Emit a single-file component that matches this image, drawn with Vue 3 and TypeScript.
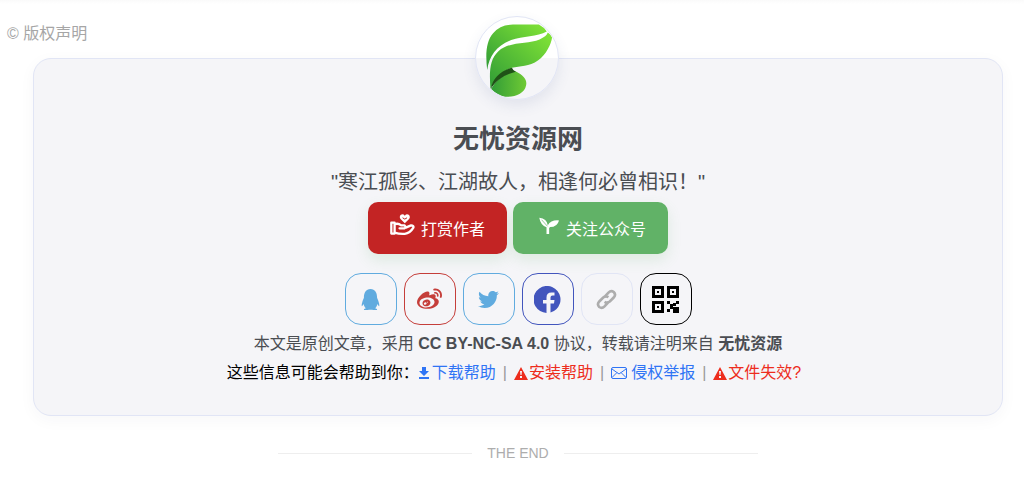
<script setup lang="ts">
interface Social {
  id: string
  label: string
  viewBox: string
  path: string
}

const socials: Social[] = [
  {
    id: 'qq',
    label: 'QQ',
    viewBox: '0 0 448 512',
    path: 'M433.754 420.445c-11.526 1.393-44.86-52.741-44.86-52.741 0 31.345-16.136 72.247-51.051 101.786 16.842 5.192 54.843 19.167 45.803 34.421-7.316 12.343-125.51 7.881-159.632 4.037-34.122 3.844-152.316 8.306-159.632-4.037-9.045-15.25 28.918-29.214 45.783-34.415-34.92-29.539-51.059-70.445-51.059-101.792 0 0-33.334 54.134-44.859 52.741-5.37-.65-12.424-29.644 9.347-99.704 10.261-33.024 21.995-60.478 40.144-105.779C60.683 98.063 108.982.006 224 0c113.737.006 163.156 96.133 160.264 214.963 18.118 45.223 29.912 72.85 40.144 105.778 21.768 70.06 14.716 99.053 9.346 99.704z',
  },
  {
    id: 'weibo',
    label: '微博',
    viewBox: '0 0 512 512',
    path: 'M407 177.6c7.6-24-13.4-46.8-37.4-41.7-22 4.8-28.8-28.1-7.1-32.8 50.1-10.9 92.3 37.1 76.5 84.8-6.8 21.2-38.8 10.8-32-10.3zM214.8 446.7C108.5 446.7 0 395.3 0 310.4c0-44.3 28-95.4 76.3-143.7C176 67 279.5 65.8 249.9 161c-4 13.1 12.3 5.7 12.3 6 79.5-33.6 140.5-16.8 114 51.4-3.7 9.4 1.1 10.9 8.3 13.1 135.7 42.3 34.8 215.2-169.7 215.2zm143.7-146.3c-5.4-55.7-78.5-94-163.4-85.7-84.8 8.6-148.8 60.3-143.4 116s78.5 94 163.4 85.7c84.8-8.6 148.8-60.3 143.4-116zM347.9 35.1c-25.9 5.6-16.8 43.7 8.3 38.3 72.3-15.2 134.8 52.8 111.7 124-7.4 24.2 29.1 37 37.4 12 31.9-99.8-55.1-195.9-157.4-174.3zm-78.5 311c-17.1 38.8-66.8 60-109.1 46.3-40.8-13.1-58-53.4-40.3-89.7 17.7-35.4 63.1-55.4 103.4-45.1 42 10.8 63.1 50.2 46 88.5zm-86.3-30c-12.9-5.4-30 .3-38 12.9-8.3 12.9-4.3 28 8.6 34 13.1 6 30.8.3 39.1-12.9 8-13.1 3.7-28.3-9.7-34zm32.6-13.4c-5.1-1.7-11.4.6-14.3 5.4-2.9 5.1-1.4 10.6 3.7 12.9 5.1 2 11.7-.3 14.6-5.4 2.8-5.2 1.1-10.9-4-12.9z',
  },
  {
    id: 'twitter',
    label: 'Twitter',
    viewBox: '0 0 512 512',
    path: 'M459.37 151.716c.325 4.548.325 9.097.325 13.645 0 138.72-105.583 298.558-298.558 298.558-59.452 0-114.68-17.219-161.137-47.106 8.447.974 16.568 1.299 25.34 1.299 49.055 0 94.213-16.568 130.274-44.832-46.132-.975-84.792-31.188-98.112-72.772 6.498.974 12.995 1.624 19.818 1.624 9.421 0 18.843-1.3 27.614-3.573-48.081-9.747-84.143-51.98-84.143-102.985v-1.299c13.969 7.797 30.214 12.67 47.431 13.319-28.264-18.843-46.781-51.005-46.781-87.391 0-19.492 5.197-37.36 14.294-52.954 51.655 63.675 129.3 105.258 216.365 109.807-1.624-7.797-2.599-15.918-2.599-24.04 0-57.828 46.782-104.934 104.934-104.934 30.213 0 57.502 12.67 76.67 33.137 23.715-4.548 46.456-13.32 66.599-25.34-7.798 24.366-24.366 44.833-46.132 57.827 21.117-2.273 41.584-8.122 60.426-16.243-14.292 20.791-32.161 39.308-52.628 54.253z',
  },
  {
    id: 'facebook',
    label: 'Facebook',
    viewBox: '0 0 54 54',
    path: 'M25 53.9A27 27 0 1 1 33 53V35h7l1-7H33v-5q0-4 4-4h4v-6h-6q-10 0-10 10v5h-7v7h7v19z',
  },
  {
    id: 'link',
    label: '复制链接',
    viewBox: '0 0 64 64',
    path: 'M26 24L38 11Q46 3 54 9Q62 17 54 26L42 38Q34 44 26 39M38 40L26 53Q18 61 10 55Q2 47 10 38L22 26Q30 20 38 25',
  },
  {
    id: 'qrcode',
    label: '二维码',
    viewBox: '0 0 27 27',
    path: 'M0 0h12v12H0zM3 3v6h6V3zM5 5h2v2H5zM15 0h12v12H15zM18 3v6h6V3zM20 5h2v2h-2zM0 15h12v12H0zM3 18v6h6v-6zM5 20h2v2H5zM15 15h3v3h-3zM18 18h3v3h3v3h-3v-1h-3zM24 15h3v3h-3zM21 17h3v3h-3zM15 23h3v3h-3zM24 21h3v6h-6v-3h3z',
  },
]
</script>

<template>
  <main class="page">
    <h2 class="notice">© 版权声明</h2>

    <section class="card">
      <svg class="avatar" viewBox="46 33 249 249" role="img" aria-label="无忧资源网">
        <defs>
          <linearGradient id="leaf" x1="0" y1="1" x2="1" y2="0">
            <stop offset="0" stop-color="#2f9b36" />
            <stop offset="1" stop-color="#83e536" />
          </linearGradient>
          <linearGradient id="stem" x1="0" y1="0" x2="1" y2="0">
            <stop offset="0" stop-color="#319c37" />
            <stop offset="1" stop-color="#6fca34" />
          </linearGradient>
        </defs>
        <path fill="url(#leaf)" d="M80 194C75 150 75 108 98 82Q120 56 158 56H237Q252 64 261 77C232 94 188 90 153 103C110 119 86 151 80 194z" />
        <path fill="url(#leaf)" d="M90 252C86 200 87 162 114 137C147 106 203 116 239 101Q260 92 264 80Q272 84 277 95C274 116 259 147 235 164C207 184 180 181 155 187C120 199 101 222 90 252z" />
        <path fill="url(#stem)" d="M92 252C108 222 134 204 166 198C192 211 202 225 198 241C194 264 165 277 135 275Q112 272 92 252z" />
        <path fill="#205217" d="M91 252C96 220 120 196 155 187Q158 195 167 199C135 207 108 222 91 252z" />
      </svg>

      <h1 class="name">无忧资源网</h1>
      <p class="quote">"寒江孤影、江湖故人，相逢何必曾相识！"</p>

      <div class="actions">
        <button class="action reward" type="button">
          <svg class="action-icon" viewBox="0 0 76 66" aria-hidden="true">
            <path fill="#fff" d="M45 28L32 15Q27 7 33 2Q40-2 45 5Q50-2 57 2Q63 7 58 15z" />
            <path fill="none" stroke="#c32424" stroke-width="3" stroke-linecap="round" d="M39 12Q45 19 51 12" />
            <path fill="none" stroke="#fff" stroke-width="7" stroke-linejoin="round" stroke-linecap="round" d="M4 26H14V59H4zM14 31Q24 26 34 34H44Q50 39 44 43H29M48 41L64 34Q73 35 71 41Q61 58 45 60Q28 61 14 56" />
          </svg>
          打赏作者
        </button>
        <button class="action follow" type="button">
          <svg class="action-icon" viewBox="-5 -3 76 66" aria-hidden="true">
            <path fill="#fff" d="M8 8Q31 10 34 31Q43 14 68 16Q63 36 41 36L38 39V57H30V37Q12 31 8 8z" />
            <path fill="none" stroke="#61b267" stroke-width="2" d="M15 14L33 34" />
          </svg>
          关注公众号
        </button>
      </div>

      <nav class="socials" aria-label="分享">
        <a v-for="s in socials" :key="s.id" class="social" :class="s.id" href="#" :aria-label="s.label">
          <svg class="social-icon" :viewBox="s.viewBox" aria-hidden="true">
            <path fill-rule="evenodd" :d="s.path" />
          </svg>
        </a>
      </nav>

      <p class="license">本文是原创文章，采用 <strong>CC BY-NC-SA 4.0</strong> 协议，转载请注明来自 <strong>无忧资源</strong></p>

      <div class="help">
        <span>这些信息可能会帮助到你：</span>
        <a class="blue" href="#">
          <svg class="glyph small" viewBox="0 0 10 12" aria-hidden="true">
            <path d="M3 0h4v4h3L5 9 0 4h3zM0 10h10v2H0z" />
          </svg>下载帮助</a>
        <span class="bar">|</span>
        <a class="red" href="#">
          <svg class="glyph" viewBox="0 0 14 13" aria-hidden="true">
            <path fill-rule="evenodd" d="M7 0l7 13H0zM6 4l.5 4h1L8 4zM6 9v2h2V9z" />
          </svg>安装帮助</a>
        <span class="bar">|</span>
        <a class="blue" href="#">
          <svg class="glyph mail" viewBox="0 0 16 12" aria-hidden="true">
            <path fill="none" stroke="currentColor" d="M2 .5h12q1.500 0 1.500 1.500v8q0 1.500-1.500 1.500H2Q.5 11.500.5 10V2Q.5.5 2 .5zM1 2l7 5 7-5M1 10.500l5-5M15 10.500l-5-5" />
          </svg>侵权举报</a>
        <span class="bar">|</span>
        <a class="red" href="#">
          <svg class="glyph" viewBox="0 0 14 13" aria-hidden="true">
            <path fill-rule="evenodd" d="M7 0l7 13H0zM6 4l.5 4h1L8 4zM6 9v2h2V9z" />
          </svg>文件失效?</a>
      </div>
    </section>

    <div class="ending">THE END</div>
  </main>
</template>

<style>
body {
  margin: 0;
  background: #fff;
}
</style>

<style scoped>
.page {
  padding: 22px 21px 12px 33px;
  font-family: "Liberation Sans", "Noto Sans CJK SC", sans-serif;
  font-size: 16px;
  line-height: 24px;
  color: #4a4d52;
  background: linear-gradient(#fafafa, #fff 4px);
}

.notice {
  margin: 0 0 12px -26px;
  font-size: 16px;
  font-weight: 400;
  color: #a6a6a6;
}

.card {
  display: flex;
  flex-direction: column;
  align-items: center;
  padding-bottom: 30px;
  border: 1px solid #e1e5f5;
  border-radius: 18px;
  background: #f5f5f8;
  box-shadow: 0 4px 16px rgba(40, 50, 80, 0.04);
}

.avatar {
  box-sizing: border-box;
  width: 84px;
  height: 84px;
  margin-top: -43px;
  margin-right: 2px;
  border: 1px solid #e1e5f5;
  border-radius: 50%;
  background: linear-gradient(#fff 50%, #f5f5f8 50%);
  box-shadow: 0 6px 14px rgba(60, 80, 140, 0.1);
}

.name {
  margin: 21px 0 0;
  font-size: 26px;
  line-height: 36px;
  font-weight: 700;
}

.quote {
  margin: 10px 0 5px;
  font-size: 20px;
  line-height: 30px;
}

.actions {
  display: flex;
  gap: 6px;
}

.action {
  display: flex;
  align-items: center;
  gap: 6px;
  height: 52px;
  padding: 4px 22px 0;
  border: 0;
  border-radius: 10px;
  font: inherit;
  color: #fff;
  box-shadow: 0 6px 14px rgba(97, 178, 103, 0.16);
}

.reward {
  background: #c32424;
}

.follow {
  background: #61b267;
}

.action-icon {
  width: 25px;
  height: 22px;
  margin-bottom: 10px;
}

.socials {
  display: flex;
  gap: 7px;
  margin: 19px 0 7px;
}

.social {
  box-sizing: border-box;
  display: flex;
  align-items: center;
  justify-content: center;
  width: 52px;
  height: 52px;
  border: 1px solid currentColor;
  border-radius: 16px;
}

.social-icon {
  width: 21px;
  height: 21px;
  fill: currentColor;
}

.qq,
.twitter {
  color: #60abdf;
}

.weibo {
  color: #c53e3a;
}

.weibo .social-icon {
  width: 25px;
  height: 25px;
}

.facebook {
  color: #4255bd;
}

.link {
  color: #adadad;
  border-color: #e1e5f5;
}

.link .social-icon {
  fill: none;
  stroke: currentColor;
  stroke-width: 8;
}

.qrcode {
  color: #000;
}

.facebook .social-icon,
.qrcode .social-icon {
  width: 27px;
  height: 27px;
}

.license {
  margin: 0;
}

.help {
  display: flex;
  align-items: center;
  margin-top: 5px;
  padding-right: 8px;
  color: #000;
}

.help a {
  display: flex;
  align-items: center;
  text-decoration: none;
}

.blue {
  color: #2f74f5;
}

.red {
  color: #ed2d1d;
}

.bar {
  margin: 0 7px;
  color: #999;
}

.glyph {
  width: 14px;
  height: 13px;
  margin-right: 1px;
  fill: currentColor;
}

.small {
  width: 10px;
  height: 12px;
  margin-right: 3px;
}

.mail {
  width: 16px;
  height: 12px;
  margin-right: 4px;
}

.ending {
  display: flex;
  align-items: center;
  justify-content: center;
  gap: 15px;
  margin-top: 25px;
  font-size: 14px;
  color: #adadad;
}

.ending::before,
.ending::after {
  content: "";
  width: 20%;
  height: 1px;
  background: #eee;
}
</style>
